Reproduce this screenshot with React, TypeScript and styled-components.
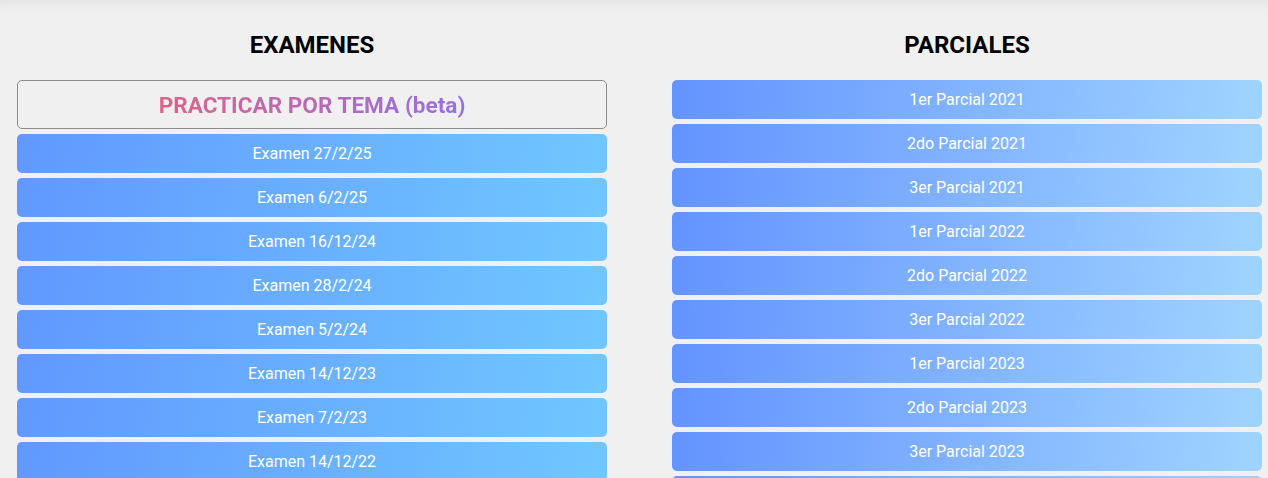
import styled, { createGlobalStyle } from "styled-components";

const GlobalStyle = createGlobalStyle`
  html, body {
    margin: 0;
    padding: 0;
    background: #f0f0f0;
    font-family: Roboto, "Liberation Sans", sans-serif;
  }
`;

const examenes = [
  "Examen 27/2/25",
  "Examen 6/2/25",
  "Examen 16/12/24",
  "Examen 28/2/24",
  "Examen 5/2/24",
  "Examen 14/12/23",
  "Examen 7/2/23",
  "Examen 14/12/22",
];

const parciales = [
  "1er Parcial 2021",
  "2do Parcial 2021",
  "3er Parcial 2021",
  "1er Parcial 2022",
  "2do Parcial 2022",
  "3er Parcial 2022",
  "1er Parcial 2023",
  "2do Parcial 2023",
  "3er Parcial 2023",
  "1er Parcial 2024",
];

export default function App() {
  return (
    <>
      <GlobalStyle />
      <StyledPage>
        <StyledColumn>
          <StyledTitle>EXAMENES</StyledTitle>
          <StyledList>
            <StyledPracticeBtn>
              <StyledGradientText>PRACTICAR POR TEMA (beta)</StyledGradientText>
            </StyledPracticeBtn>
            {examenes.map((e) => (
              <StyledItem key={e} variant="examen">
                {e}
              </StyledItem>
            ))}
          </StyledList>
        </StyledColumn>
        <StyledColumn>
          <StyledTitle>PARCIALES</StyledTitle>
          <StyledList>
            {parciales.map((p) => (
              <StyledItem key={p} variant="parcial">
                {p}
              </StyledItem>
            ))}
          </StyledList>
        </StyledColumn>
      </StyledPage>
    </>
  );
}

const StyledPage = styled.div`
  display: grid;
  grid-template-columns: 590px 590px;
  column-gap: 65px;
  padding: 30px 6px 0 17px;
  height: 478px;
  box-sizing: border-box;
  overflow: hidden;
  box-shadow: inset 0 12px 14px -10px rgba(0, 0, 0, 0.07);
`;

const StyledColumn = styled.div`
  display: flex;
  flex-direction: column;
  gap: 20px;
`;

const StyledTitle = styled.h2`
  margin: 0;
  font-size: 24px;
  line-height: 30px;
  font-weight: 700;
  text-align: center;
  color: #000000;
`;

const StyledList = styled.div`
  display: flex;
  flex-direction: column;
  gap: 5px;
`;

const StyledPracticeBtn = styled.button`
  height: 49px;
  border: 1px solid #8c8c8c;
  border-radius: 5px;
  background: transparent;
  font-family: Roboto, "Liberation Sans", sans-serif;
  font-size: 22.6px;
  font-weight: 700;
  cursor: pointer;
  display: flex;
  align-items: center;
  justify-content: center;
  padding: 2px 0 0;
`;

const StyledGradientText = styled.span`
  background: linear-gradient(90deg, #dc6389, #9471e2);
  -webkit-background-clip: text;
  background-clip: text;
  color: transparent;
`;

type StyledItemProps = {
  variant: "examen" | "parcial";
};

const StyledItem = styled.button<StyledItemProps>`
  height: 39px;
  flex-shrink: 0;
  border: none;
  border-radius: 5px;
  color: #ffffff;
  font-family: Roboto, "Liberation Sans", sans-serif;
  font-size: 16px;
  font-weight: 400;
  cursor: pointer;
  padding: 0;
  background: ${(props) =>
    props.variant === "examen"
      ? "linear-gradient(100deg, #6198ff, #70c7ff)"
      : "linear-gradient(100deg, #6393ff, #a0d4ff)"};
`;
